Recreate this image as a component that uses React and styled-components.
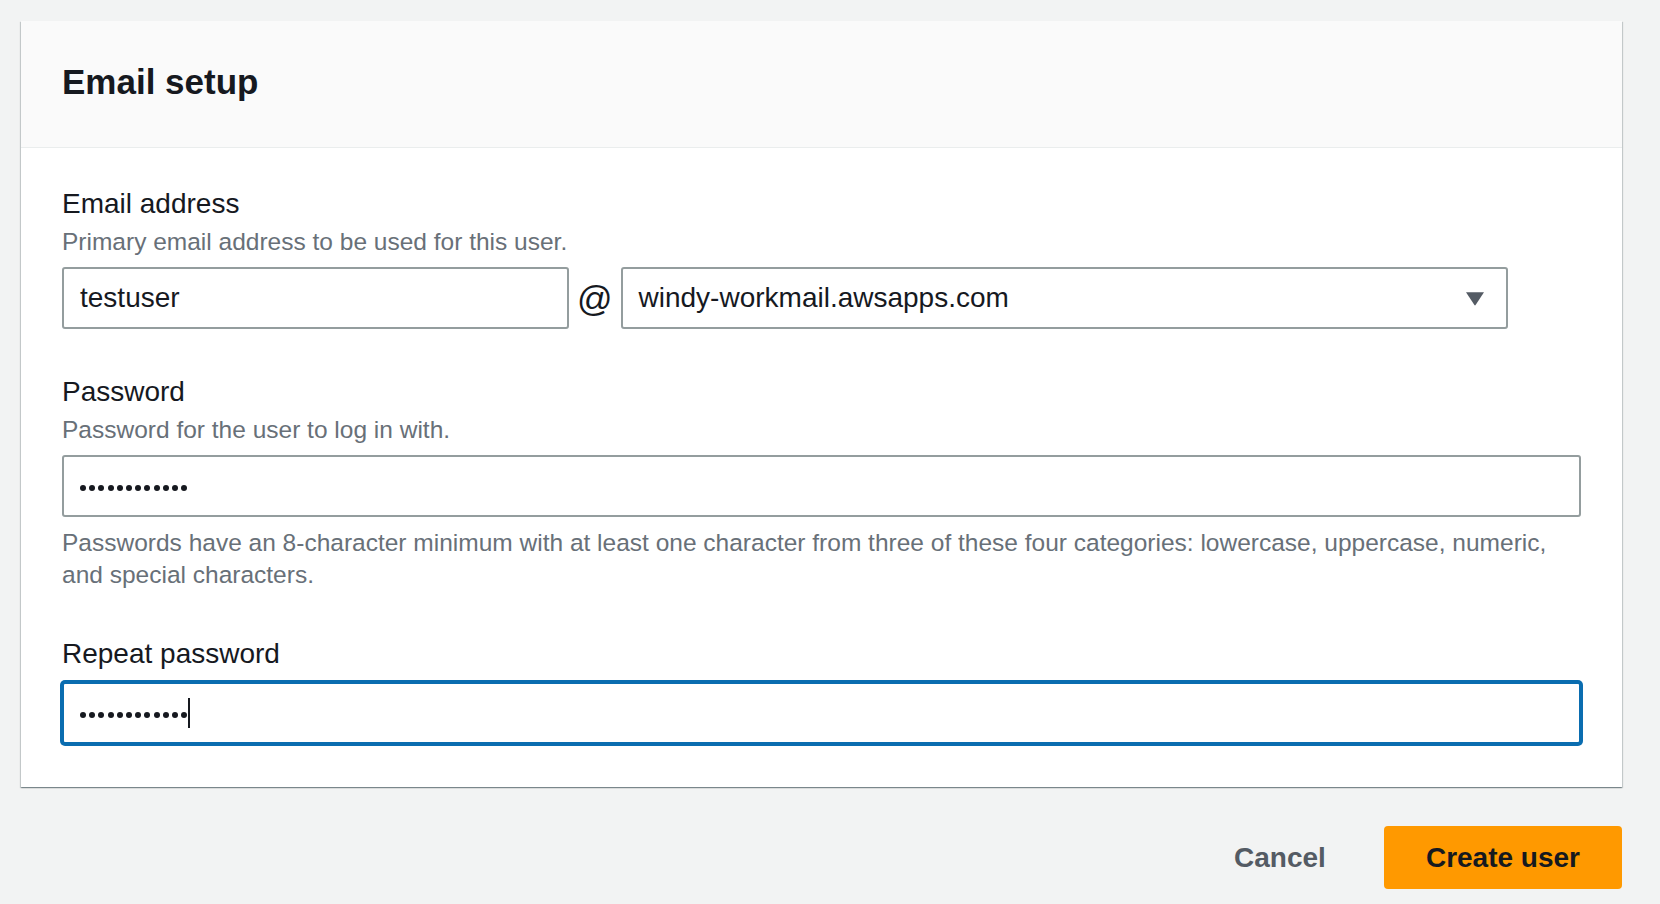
import React from "react";
import styled, { createGlobalStyle } from "styled-components";

const GlobalStyle = createGlobalStyle`
  * {
    box-sizing: border-box;
  }
  body {
    margin: 0;
    background: #f2f3f3;
    font-family: "Liberation Sans", Arial, sans-serif;
    color: #16191f;
  }
`;

const Page = styled.div`
  min-height: 100vh;
  padding: 21px 38px 15px 21px;
`;

const Card = styled.section`
  background: #fff;
  box-shadow: 0 1px 1px 0 rgba(0, 28, 36, 0.3),
    1px 1px 1px 0 rgba(0, 28, 36, 0.15), -1px 1px 1px 0 rgba(0, 28, 36, 0.15);
`;

const CardHeader = styled.header`
  height: 127px;
  display: flex;
  align-items: center;
  padding: 0 41px 4px;
  background: #fafafa;
  border-bottom: 1px solid #eaeded;
`;

const Title = styled.h2`
  margin: 0;
  font-size: 35px;
  font-weight: 700;
  line-height: 42px;
  color: #16191f;
`;

const CardBody = styled.div`
  display: flex;
  flex-direction: column;
  gap: 45px;
  padding: 38px 41px 43px;
`;

const FormField = styled.div`
  display: flex;
  flex-direction: column;
`;

const Label = styled.label`
  font-size: 28px;
  line-height: 36px;
  color: #16191f;
`;

const Hint = styled.div`
  margin-top: 4px;
  font-size: 24.5px;
  line-height: 32px;
  color: #687078;
`;

const Constraint = styled(Hint)`
  margin-top: 10px;
`;

const Row = styled.div`
  display: flex;
  align-items: center;
  margin-top: ${({ $top }) => $top || 9}px;
`;

const Box = styled.div`
  display: flex;
  align-items: center;
  height: 62px;
  width: ${({ $width }) => ($width ? `${$width}px` : "100%")};
  flex: none;
  padding: 0 16px;
  background: #fff;
  border: 2px solid ${({ $focused }) => ($focused ? "#0a6db0" : "#949d9e")};
  border-radius: 3px;
  box-shadow: ${({ $focused }) => ($focused ? "0 0 0 2px #0a6db0" : "none")};
  font-size: 28px;
  color: #16191f;
`;

const SelectBox = styled(Box)`
  justify-content: space-between;
  padding-right: 21px;
  cursor: pointer;
`;

const At = styled.span`
  padding: 0 8px;
  font-size: 35px;
  line-height: 1;
  color: #16191f;
`;

const Dots = styled.span`
  display: inline-flex;
  gap: 3.2px;
  margin-top: 3px;
`;

const Dot = styled.span`
  width: 6px;
  height: 6px;
  border-radius: 50%;
  background: #16191f;
`;

const Caret = styled.span`
  width: 2px;
  height: 30px;
  margin-left: 1px;
  background: #16191f;
`;

const Footer = styled.footer`
  display: flex;
  justify-content: flex-end;
  align-items: center;
  gap: 58px;
  margin-top: 39px;
`;

const LinkButton = styled.button`
  border: none;
  background: none;
  padding: 0;
  font-family: inherit;
  font-size: 28px;
  font-weight: 700;
  color: #545b64;
  cursor: pointer;
`;

const PrimaryButton = styled.button`
  height: 63px;
  padding: 0 42px;
  border: none;
  border-radius: 4px;
  background: #ff9900;
  font-family: inherit;
  font-size: 28px;
  font-weight: 700;
  color: #16191f;
  cursor: pointer;
`;

const Arrow = () => (
  <svg width="20" height="15" viewBox="0 0 20 15">
    <path d="M1 1.2 H19 L10.6 14 Q10 14.8 9.4 14 Z" fill="#545b64" />
  </svg>
);

const Masked = ({ count = 12 }) => (
  <Dots>
    {Array.from({ length: count }).map((_, i) => (
      <Dot key={i} />
    ))}
  </Dots>
);

export default function App() {
  return (
    <>
      <GlobalStyle />
      <Page>
        <Card>
          <CardHeader>
            <Title>Email setup</Title>
          </CardHeader>
          <CardBody>
            <FormField>
              <Label>Email address</Label>
              <Hint>Primary email address to be used for this user.</Hint>
              <Row>
                <Box $width={507}>testuser</Box>
                <At>@</At>
                <SelectBox $width={887}>
                  <span>windy-workmail.awsapps.com</span>
                  <Arrow />
                </SelectBox>
              </Row>
            </FormField>

            <FormField>
              <Label>Password</Label>
              <Hint>Password for the user to log in with.</Hint>
              <Row>
                <Box>
                  <Masked />
                </Box>
              </Row>
              <Constraint>
                Passwords have an 8-character minimum with at least one
                character from three of these four categories: lowercase,
                uppercase, numeric, and special characters.
              </Constraint>
            </FormField>

            <FormField>
              <Label>Repeat password</Label>
              <Row $top={10}>
                <Box $focused>
                  <Masked />
                  <Caret />
                </Box>
              </Row>
            </FormField>
          </CardBody>
        </Card>
        <Footer>
          <LinkButton>Cancel</LinkButton>
          <PrimaryButton>Create user</PrimaryButton>
        </Footer>
      </Page>
    </>
  );
}
